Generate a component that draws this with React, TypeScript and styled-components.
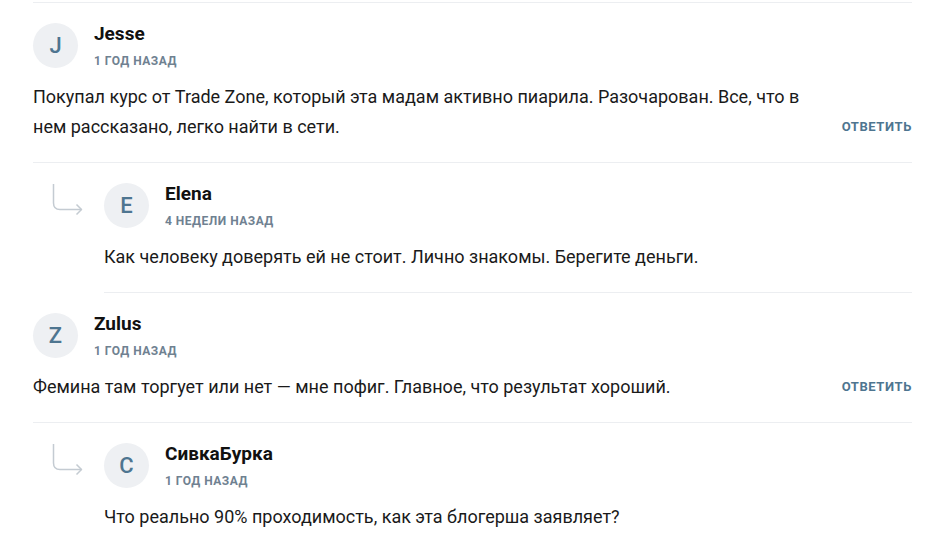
import React from 'react';
import styled, {createGlobalStyle} from "styled-components";

const GlobalStyle = createGlobalStyle`
  body {
    margin: 0;
    background: #fff;
    font-family: Roboto, "Liberation Sans", Arial, sans-serif;
  }
`;

type CommentData = {
    author: string;
    time: string;
    text: string;
    replies?: CommentData[];
};

const comments: CommentData[] = [
    {
        author: "Jesse",
        time: "1 год назад",
        text: "Покупал курс от Trade Zone, который эта мадам активно пиарила. Разочарован. Все, что в нем рассказано, легко найти в сети.",
        replies: [
            {
                author: "Elena",
                time: "4 недели назад",
                text: "Как человеку доверять ей не стоит. Лично знакомы. Берегите деньги.",
            },
        ],
    },
    {
        author: "Zulus",
        time: "1 год назад",
        text: "Фемина там торгует или нет — мне пофиг. Главное, что результат хороший.",
        replies: [
            {
                author: "СивкаБурка",
                time: "1 год назад",
                text: "Что реально 90% проходимость, как эта блогерша заявляет?",
            },
        ],
    },
];

const ReplyArrow = () => (
    <svg width="32" height="32" viewBox="0 0 32 32" fill="none">
        <path d="M1.5 0 V19 Q1.5 25.5 8 25.5 H29.5" stroke="#c4cbd2" strokeWidth="1.5"/>
        <path d="M24.5 20.5 L29.5 25.5 L24.5 30.5" stroke="#c4cbd2" strokeWidth="1.5" strokeLinejoin="round"/>
    </svg>
);

const CommentHeader = ({author, time}: { author: string; time: string }) => (
    <Header>
        <Avatar>{author.charAt(0).toUpperCase()}</Avatar>
        <Meta>
            <Author>{author}</Author>
            <Time>{time}</Time>
        </Meta>
    </Header>
);

export default function App() {
    return (
        <>
            <GlobalStyle/>
            <Page>
                <List>
                    {comments.map((c) => (
                        <React.Fragment key={c.author}>
                            <Comment>
                                <CommentHeader author={c.author} time={c.time}/>
                                <BodyRow>
                                    <Text>{c.text}</Text>
                                    <ReplyButton>Ответить</ReplyButton>
                                </BodyRow>
                            </Comment>
                            {c.replies?.map((r) => (
                                <ReplyRow key={r.author}>
                                    <ArrowCol><ReplyArrow/></ArrowCol>
                                    <ReplyBody>
                                        <CommentHeader author={r.author} time={r.time}/>
                                        <BodyRow>
                                            <Text>{r.text}</Text>
                                        </BodyRow>
                                    </ReplyBody>
                                </ReplyRow>
                            ))}
                        </React.Fragment>
                    ))}
                </List>
            </Page>
        </>
    );
}

const Page = styled.main`
  padding: 2px 21px 0 33px;
`;

const List = styled.section`
  border-top: 1px solid #eceef1;
`;

const Comment = styled.article`
  padding: 20px 0;
  border-bottom: 1px solid #eceef1;
`;

const ReplyRow = styled.div`
  display: flex;
`;

const ArrowCol = styled.div`
  width: 71px;
  flex-shrink: 0;
  padding: 21px 0 0 19px;
  box-sizing: border-box;
`;

const ReplyBody = styled.article`
  flex: 1;
  padding: 20px 0;
  border-bottom: 1px solid #eceef1;
`;

const Header = styled.div`
  display: flex;
  align-items: flex-start;
  gap: 16px;
  height: 45px;
`;

const Avatar = styled.div`
  width: 45px;
  height: 45px;
  border-radius: 50%;
  background: #eef0f3;
  color: #4e7590;
  font-size: 22px;
  font-weight: 500;
  display: flex;
  align-items: center;
  justify-content: center;
  flex-shrink: 0;
`;

const Meta = styled.div`
  display: flex;
  flex-direction: column;
`;

const Author = styled.div`
  font-size: 19px;
  line-height: 22px;
  font-weight: 700;
  color: #111;
`;

const Time = styled.div`
  margin-top: 8px;
  font-size: 12px;
  line-height: 16px;
  font-weight: 700;
  letter-spacing: 0.5px;
  text-transform: uppercase;
  color: #6f8191;
`;

const BodyRow = styled.div`
  display: flex;
  align-items: flex-end;
  justify-content: space-between;
  gap: 24px;
  margin-top: 14px;
`;

const Text = styled.p`
  margin: 0;
  max-width: 780px;
  font-size: 18px;
  line-height: 30px;
  color: #1a1a1a;
`;

const ReplyButton = styled.button`
  border: none;
  background: none;
  padding: 0;
  font-family: inherit;
  font-size: 13px;
  line-height: 30px;
  font-weight: 700;
  letter-spacing: 0.6px;
  text-transform: uppercase;
  color: #4e7590;
  cursor: pointer;
  flex-shrink: 0;
`;
